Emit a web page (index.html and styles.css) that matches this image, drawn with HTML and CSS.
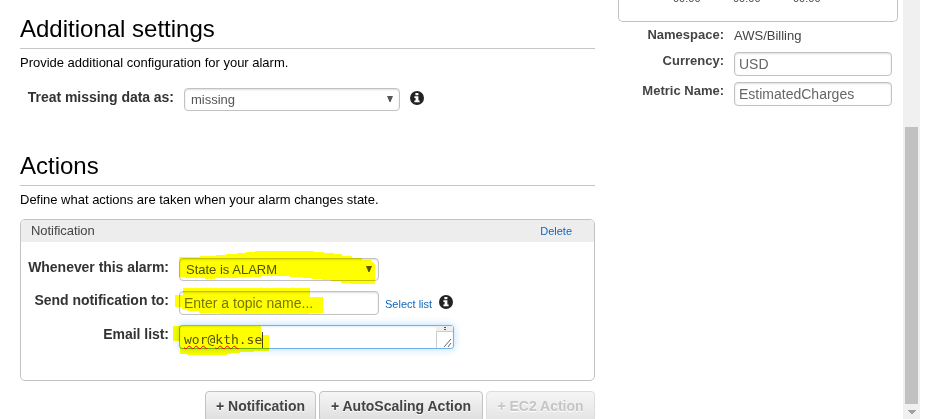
FILE: index.html
```html
<!DOCTYPE html>
<html lang="en">
<head>
<meta charset="utf-8">
<title>Create Alarm</title>
<link rel="stylesheet" href="styles.css">
</head>
<body>
<div class="page">
  <main class="main">
    <section class="settings">
      <h2>Additional settings</h2>
      <p class="intro intro-settings">Provide additional configuration for your alarm.</p>
      <div class="row row-missing">
        <span class="label label-missing">Treat missing data as:</span>
        <div class="field select select-missing"><span>missing</span><svg class="arrow" viewBox="0 0 6 6"><path d="M0 0h6L3.5 6h-1z"/></svg></div>
        <svg class="info" viewBox="0 0 14 14"><circle cx="7" cy="7" r="7"/><path d="M5.400 2h3v2.200h-3zM4.400 5.300h4v4.300h1.200v1.700H4.400V9.600h1.200V7H4.400z"/></svg>
      </div>
    </section>
    <section class="actions">
      <h2>Actions</h2>
      <p class="intro intro-actions">Define what actions are taken when your alarm changes state.</p>
      <div class="panel">
        <div class="panel-head"><span class="panel-title">Notification</span><a class="link">Delete</a></div>
        <div class="row row-state">
          <span class="label label-state">Whenever this alarm:</span>
          <div class="field select select-state"><span>State is ALARM</span><svg class="arrow" viewBox="0 0 6 6"><path d="M0 0h6L3.500 6h-1z"/></svg></div>
        </div>
        <div class="row row-topic">
          <span class="label label-topic">Send notification to:</span>
          <div class="field topic"><span>Enter a topic name...</span></div>
          <a class="link select-list">Select list</a>
          <svg class="info" viewBox="0 0 14 14"><circle cx="7" cy="7" r="7"/><path d="M5.400 2h3v2.200h-3zM4.400 5.300h4v4.300h1.200v1.700H4.400V9.600h1.200V7H4.400z"/></svg>
        </div>
        <div class="row row-email">
          <span class="label label-email">Email list:</span>
          <div class="field email">
            <span class="address"><span class="typo">wor</span>@<span class="typo">kth</span>.se</span><i class="caret"></i>
            <svg class="grip" viewBox="0 0 17 22"><path class="track" d="M0 0h17v5H0z"/><path class="edge" d="M.5 22V5.500H17"/><path class="dots" d="M8 1h2v1H8zM8 3h2v1H8z"/><path class="lines" d="M8 21l7-8M12 21l3-4"/></svg>
          </div>
        </div>
        <svg class="marker" viewBox="0 0 575 162">
          <path d="M159 38H180V37H196V36H206V35H217V34H226V33H235V32H294V33H304V34H314V35H322V37H332V39H342V41H351V43H354V45H355V65H330V64H321V62H311V61H302V60H292V59H283V58H269V57H241V58H218V59H195V60H185V59H166V58H159z"/>
          <path d="M163 69H290V78H303V94H290V95H199V94H179V92H167V90H162V88H155V76H163z"/>
          <path d="M153 107H241V116H249V132H234V133H220V134H211V135H207V136H167V135H160V122H153z"/>
        </svg>
      </div>
      <div class="buttons">
        <span class="button add-notification">+ Notification</span>
        <span class="button add-scaling">+ AutoScaling Action</span>
        <span class="button add-ec2 disabled">+ EC2 Action</span>
      </div>
    </section>
  </main>
  <aside class="side">
    <div class="chart"><span>00:00</span><span>00:00</span><span>00:00</span></div>
    <div class="fact namespace"><span class="label">Namespace:</span><span class="value">AWS/Billing</span></div>
    <div class="fact currency"><span class="label">Currency:</span><div class="field"><span>USD</span></div></div>
    <div class="fact metric"><span class="label">Metric Name:</span><div class="field"><span>EstimatedCharges</span></div></div>
  </aside>
  <div class="scrollbar"><div class="thumb"></div><svg class="down" viewBox="0 0 8 4"><path d="M0 0h8v1H7v1H6v1H5v1H3V3H2V2H1V1H0z"/></svg></div>
</div>
</body>
</html>
```

FILE: styles.css
```css
* { box-sizing: border-box; }
body { margin: 0; background: #fff; color: #000; font-family: "Liberation Sans", Arial, sans-serif; font-size: 13px; overflow: hidden; }
.page { display: flex; width: 931px; height: 419px; overflow: hidden; }
.main { width: 575px; margin-left: 20px; flex: none; }
h2 { margin: 0; height: 35px; padding-top: 1px; border-bottom: 1px solid #c6c6c6; font-size: 24px; font-weight: normal; line-height: 28px; white-space: nowrap; }
.settings { height: 137px; padding-top: 14px; }
.actions { padding-top: 14px; }
.intro { margin: 0; height: 28px; padding-top: 5px; font-size: 13px; letter-spacing: -.01px; line-height: 17px; white-space: nowrap; }
.intro-actions { height: 33px; }
.row { display: flex; }
.settings .row { margin-top: 11px; }
.label { flex: none; font-weight: bold; font-size: 13px; line-height: 18px; color: #333; text-align: right; white-space: nowrap; }
.row .label { font-size: 14px; letter-spacing: -.04px; }
.label-missing { width: 154px; }
.label-state, .label-topic, .label-email { width: 148px; }
.field { display: flex; align-items: center; border: 1px solid #c2c2c2; border-radius: 4px; background: #fff; box-shadow: inset 0 1px 2px #ddd; color: #555; white-space: nowrap; }
.select { height: 23px; padding: 0 6px; justify-content: space-between; font-size: 13px; }
.select-missing { width: 216px; margin-left: 10px; }
.arrow { width: 6px; height: 6px; fill: #555; margin-bottom: 2px; }
.info { width: 14px; height: 14px; margin: 3px 0 0 10px; fill: #222; }
.info path { fill: #fff; }
.panel { position: relative; height: 162px; border: 1px solid #c2c2c2; border-radius: 5px; overflow: hidden; }
.panel-head { display: flex; justify-content: space-between; height: 22px; padding: 0 22px 0 10px; background: #ededed; line-height: 22px; color: #444; font-size: 12px; }
.panel-title { font-size: 13px; letter-spacing: -.05px; line-height: 21px; }
.link { color: #1166bb; font-size: 11px; white-space: nowrap; }
.row-state { margin-top: 16px; height: 33px; }
.row-topic { height: 34px; }
.select-state { width: 200px; margin-left: 10px; }
.topic { width: 200px; height: 24px; margin-left: 10px; padding-left: 4px; font-size: 14px; color: #777; }
.select-list { margin: 5px 0 0 6px; line-height: 17px; }
.row-topic .info { margin: 4px 0 0 7px; }
.email { position: relative; width: 275px; height: 24px; margin-left: 10px; padding: 5px 0 0 4px; border-color: #70b3ec; border-radius: 3px; box-shadow: 0 0 8px #b3daff, inset 0 1px 2px #ddecfa; color: #555; }
.address { font: 13px/18px "DejaVu Sans Mono", monospace; }
.typo { text-decoration: underline wavy #e00 1px; text-decoration-skip-ink: none; text-underline-offset: 1px; }
.caret { width: 1px; height: 16px; background: #444; }
.grip { position: absolute; right: 0; top: 0; width: 17px; height: 22px; }
.grip .track { fill: #efefef; }
.grip .edge { fill: none; stroke: #ccc; }
.grip .dots { fill: #555; }
.grip .lines { fill: none; stroke: #666; }
.marker { position: absolute; left: -1px; top: -1px; width: 575px; height: 162px; fill: #ff0; mix-blend-mode: multiply; pointer-events: none; }
.buttons { display: flex; justify-content: flex-end; gap: 3px; margin-top: 10px; }
.button { height: 31px; border: 1px solid #c2c2c2; border-radius: 4px; background: linear-gradient(#f6f6f6, #dedede); color: #444; font-weight: bold; font-size: 14px; line-height: 29px; text-align: center; white-space: nowrap; text-shadow: 0 1px #fff; }
.add-notification { width: 111px; }
.add-scaling { width: 164px; }
.add-ec2 { width: 109px; }
.disabled { color: #c5c5c5; border-color: #ddd; background: linear-gradient(#f5f5f5, #e4e4e4); }
.side { width: 280px; margin-left: 23px; flex: none; }
.chart { display: flex; gap: 33px; height: 22px; padding-left: 54px; border: 1px solid #c2c2c2; border-top: 0; border-radius: 0 0 5px 5px; font-size: 11px; color: #444; }
.chart span { width: 27px; height: 14px; line-height: 12px; margin-top: -8px; }
.fact { display: flex; }
.fact .label { width: 106px; color: #444; }
.namespace { height: 30px; padding-top: 4px; }
.namespace .value { margin: 1px 0 0 10px; line-height: 18px; color: #444; }
.fact .field { width: 158px; height: 24px; margin-left: 10px; padding-left: 4px; font-size: 14px; color: #666; }
.currency { height: 30px; }
.scrollbar { width: 17px; margin-left: 5px; padding: 127px 2px 0; background: #f0f0f0; }
.thumb { width: 13px; height: 277px; background: #c1c1c1; }
.down { display: block; width: 8px; height: 4px; margin: 6px 0 0 3px; fill: #a0a0a0; }
```
